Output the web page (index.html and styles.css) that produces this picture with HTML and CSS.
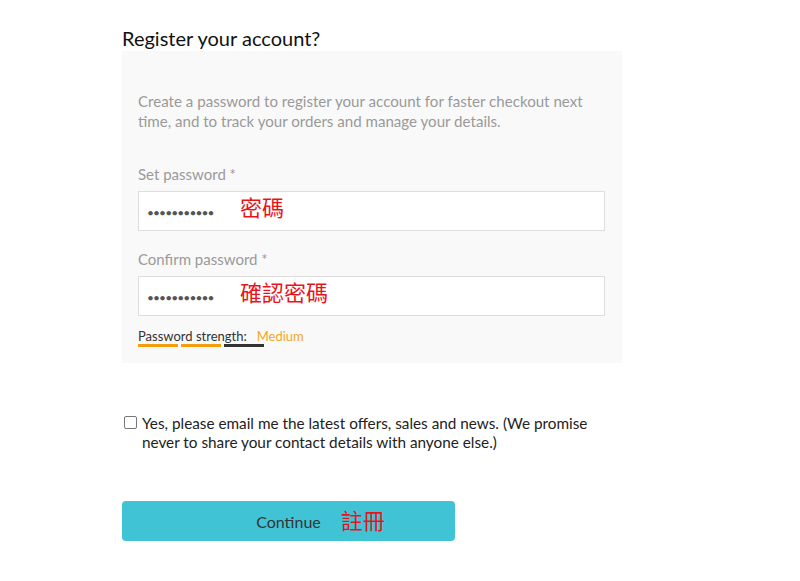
FILE: index.html
```html
<!DOCTYPE html>
<html lang="en">
<head>
  <meta charset="UTF-8">
  <meta name="viewport" content="width=device-width, initial-scale=1.0">
  <title>Register your account</title>
  <link rel="stylesheet" href="styles.css">
</head>
<body>
  <div class="container">
    <h2 class="title">Register your account?</h2>
    <div class="panel">
      <p class="intro">Create a password to register your account for faster checkout next time, and to track your orders and manage your details.</p>

      <label class="field-label" for="password">Set password *</label>
      <div class="input-box">
        <span class="dots">&bull;&bull;&bull;&bull;&bull;&bull;&bull;&bull;&bull;&bull;&bull;</span>
        <span class="note">密碼</span>
      </div>

      <label class="field-label second" for="confirm">Confirm password *</label>
      <div class="input-box">
        <span class="dots">&bull;&bull;&bull;&bull;&bull;&bull;&bull;&bull;&bull;&bull;&bull;</span>
        <span class="note">確認密碼</span>
      </div>

      <div class="strength">
        <div class="strength-text">
          <span>Password strength:</span>
          <span class="strength-value">Medium</span>
        </div>
        <div class="strength-bars">
          <span class="bar on"></span>
          <span class="bar on"></span>
          <span class="bar"></span>
        </div>
      </div>
    </div>

    <label class="newsletter">
      <span class="checkbox"></span>
      <span>Yes, please email me the latest offers, sales and news. (We promise never to share your contact details with anyone else.)</span>
    </label>

    <a href="#" class="continue">
      <span>Continue</span>
      <span class="note">註冊</span>
    </a>
  </div>
</body>
</html>
```

FILE: styles.css
```css
* {
  box-sizing: border-box;
}

body {
  font-family: Lato, "Open Sans", sans-serif;
  background: #ffffff;
  margin: 0;
  padding: 0;
  color: #222;
}

.container {
  width: 500px;
  margin-left: 122px;
  padding-top: 26px;
}

.title {
  font-size: 20px;
  font-weight: 400;
  color: #111;
  margin: 0;
  line-height: 25px;
}

.panel {
  background: #f9f9f9;
  width: 500px;
  height: 312px;
  padding: 40px 17px 0 16px;
}

.intro {
  margin: 0;
  font-size: 15.1px;
  line-height: 20px;
  color: #999;
}

.field-label {
  display: block;
  font-size: 15px;
  line-height: 20px;
  color: #999;
  margin-top: 33px;
  margin-bottom: 7px;
}

.field-label.second {
  margin-top: 18px;
}

.input-box {
  display: flex;
  align-items: center;
  height: 40px;
  background: #fff;
  border: 1px solid #dedede;
  padding-left: 8px;
}

.dots {
  font-size: 12px;
  letter-spacing: -0.9px;
  color: #555;
  width: 93px;
  padding-top: 2px;
}

.note {
  font-family: "Noto Sans CJK TC", sans-serif;
  color: #e8141c;
  font-size: 22px;
  line-height: 24px;
  margin-top: -10px;
}

.strength {
  margin-top: 12px;
}

.strength-text {
  display: flex;
  gap: 10px;
  font-size: 13px;
  line-height: 16px;
  color: #333;
}

.strength-value {
  color: #f5a623;
}

.strength-bars {
  display: flex;
  gap: 3px;
  margin-top: 0;
}

.bar {
  width: 40px;
  height: 3px;
  background: #333;
}

.bar.on {
  background: #f59e0b;
}

.newsletter {
  display: flex;
  gap: 5px;
  margin-top: 51px;
  margin-left: 2px;
  font-size: 15.3px;
  line-height: 19px;
  color: #222;
  width: 480px;
}

.checkbox {
  flex: none;
  width: 13px;
  height: 13px;
  border: 1px solid #777;
  border-radius: 2px;
  background: #fff;
  margin-top: 2px;
}

.continue {
  display: flex;
  justify-content: center;
  align-items: center;
  gap: 20px;
  width: 333px;
  height: 40px;
  margin-top: 49px;
  background: #41c3d6;
  border-radius: 4px;
  color: #333;
  font-size: 16px;
  text-decoration: none;
  padding-left: 64px;
}

.continue .note {
  margin-top: -4px;
}
```
